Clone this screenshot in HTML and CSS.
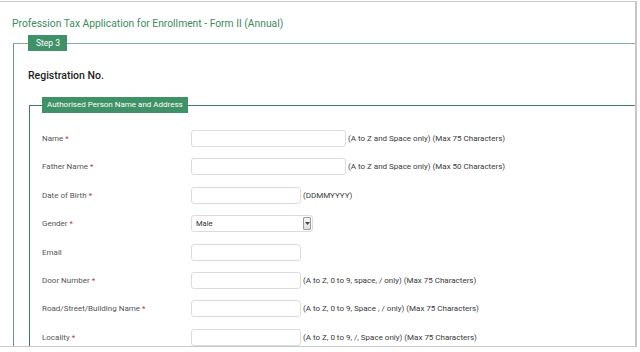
FILE: index.html
```html
<!DOCTYPE html>
<html>
<head>
<meta charset="utf-8">
<link rel="stylesheet" href="styles.css">
</head>
<body>
<div class="page">
  <h1 class="title">Profession Tax Application for Enrollment - Form II (Annual)</h1>
  <fieldset class="outer">
    <legend class="tag">Step 3</legend>
    <div class="reg">Registration No.</div>
    <fieldset class="inner">
      <legend class="tag">Authorised Person Name and Address</legend>
      <div class="rows">
        <div class="row"><label class="lbl">Name <span class="req">*</span></label><span class="inp wide"></span><span class="hint">(A to Z and Space only) (Max 75 Characters)</span></div>
        <div class="row"><label class="lbl">Father Name <span class="req">*</span></label><span class="inp wide"></span><span class="hint">(A to Z and Space only) (Max 50 Characters)</span></div>
        <div class="row"><label class="lbl">Date of Birth <span class="req">*</span></label><span class="inp"></span><span class="hint">(DDMMYYYY)</span></div>
        <div class="row"><label class="lbl">Gender <span class="req">*</span></label><span class="sel"><span class="selval">Male</span><span class="arrow"><svg width="5" height="3" viewBox="0 0 5 3"><path d="M0 0H5L2.5 3Z" fill="#444"/></svg></span></span></div>
        <div class="row"><label class="lbl">Email</label><span class="inp"></span></div>
        <div class="row"><label class="lbl">Door Number <span class="req">*</span></label><span class="inp"></span><span class="hint">(A to Z, 0 to 9, space, / only) (Max 75 Characters)</span></div>
        <div class="row"><label class="lbl">Road/Street/Building Name <span class="req">*</span></label><span class="inp"></span><span class="hint">(A to Z, 0 to 9, Space , / only) (Max 75 Characters)</span></div>
        <div class="row"><label class="lbl">Locality <span class="req">*</span></label><span class="inp"></span><span class="hint">(A to Z, 0 to 9, /, Space only) (Max 75 Characters)</span></div>
      </div>
    </fieldset>
  </fieldset>
</div>
</body>
</html>
```
FILE: styles.css
```css
html, body {
  margin: 0;
  padding: 0;
  background: #fff;
}
body {
  font-family: Roboto, "Liberation Sans", Arial, sans-serif;
}
.page {
  margin-top: 1px;
  width: 635px;
  height: 344px;
  border-top: 1px solid #c9c9c9;
  border-right: 2px solid #c6c6c6;
  border-bottom: 1px solid #c9c9c9;
  overflow: hidden;
  background: #fff;
}
.title {
  margin: 16px 0 0 12px;
  font-size: 10.3px;
  line-height: 12px;
  font-weight: 400;
  color: #3d8a5e;
  height: 12px;
}
.outer {
  margin: 5px 0 0 13px;
  border: 0;
  border-top: 1px solid #7fae97;
  border-left: 1px solid #5f9a7c;
  padding: 0 0 0 14px;
  min-width: 0;
}
.tag {
  background: #3f9167;
  color: #fff;
  font-size: 8.5px;
  line-height: 16px;
  height: 16px;
  padding: 0 7px;
  margin: 0;
}
.outer > .tag {
  padding: 0 7px 0 8px;
}
.reg {
  margin-top: 18px;
  font-size: 10.5px;
  line-height: 14px;
  color: #1e1e1e;
  font-weight: 500;
}
.inner {
  margin: 14px 0 0 1px;
  border: 0;
  border-top: 1px solid #3e7a5d;
  border-left: 1px solid #3e7a5d;
  padding: 0 0 0 12px;
  min-width: 0;
}
.inner > .tag {
  font-size: 8px;
  padding: 0 5px;
}
.rows {
  margin-top: 17px;
  display: flex;
  flex-direction: column;
  gap: 11.4px;
}
.row {
  display: flex;
  align-items: center;
  height: 17px;
}
.lbl {
  width: 149px;
  flex: none;
  font-size: 8px;
  color: #555;
}
.req {
  color: #c0392b;
}
.inp {
  width: 108px;
  height: 15px;
  border: 1px solid #dcdcdc;
  border-radius: 3px;
  background: #fff;
  flex: none;
}
.inp.wide {
  width: 153px;
}
.hint {
  margin-left: 2px;
  font-size: 8px;
  color: #3a3a3a;
  white-space: nowrap;
}
.sel {
  width: 120px;
  height: 15px;
  border: 1px solid #dcdcdc;
  border-radius: 3px;
  display: flex;
  align-items: center;
  justify-content: space-between;
  flex: none;
}
.selval {
  margin-left: 4px;
  font-size: 7.5px;
  color: #333;
}
.arrow {
  width: 8px;
  height: 13px;
  margin-right: 1px;
  border: 1px solid #9a9a9a;
  border-radius: 1px;
  background: linear-gradient(#fafafa, #dedede);
  display: flex;
  align-items: center;
  justify-content: center;
  box-sizing: border-box;
}
.arrow svg {
  display: block;
}
```
